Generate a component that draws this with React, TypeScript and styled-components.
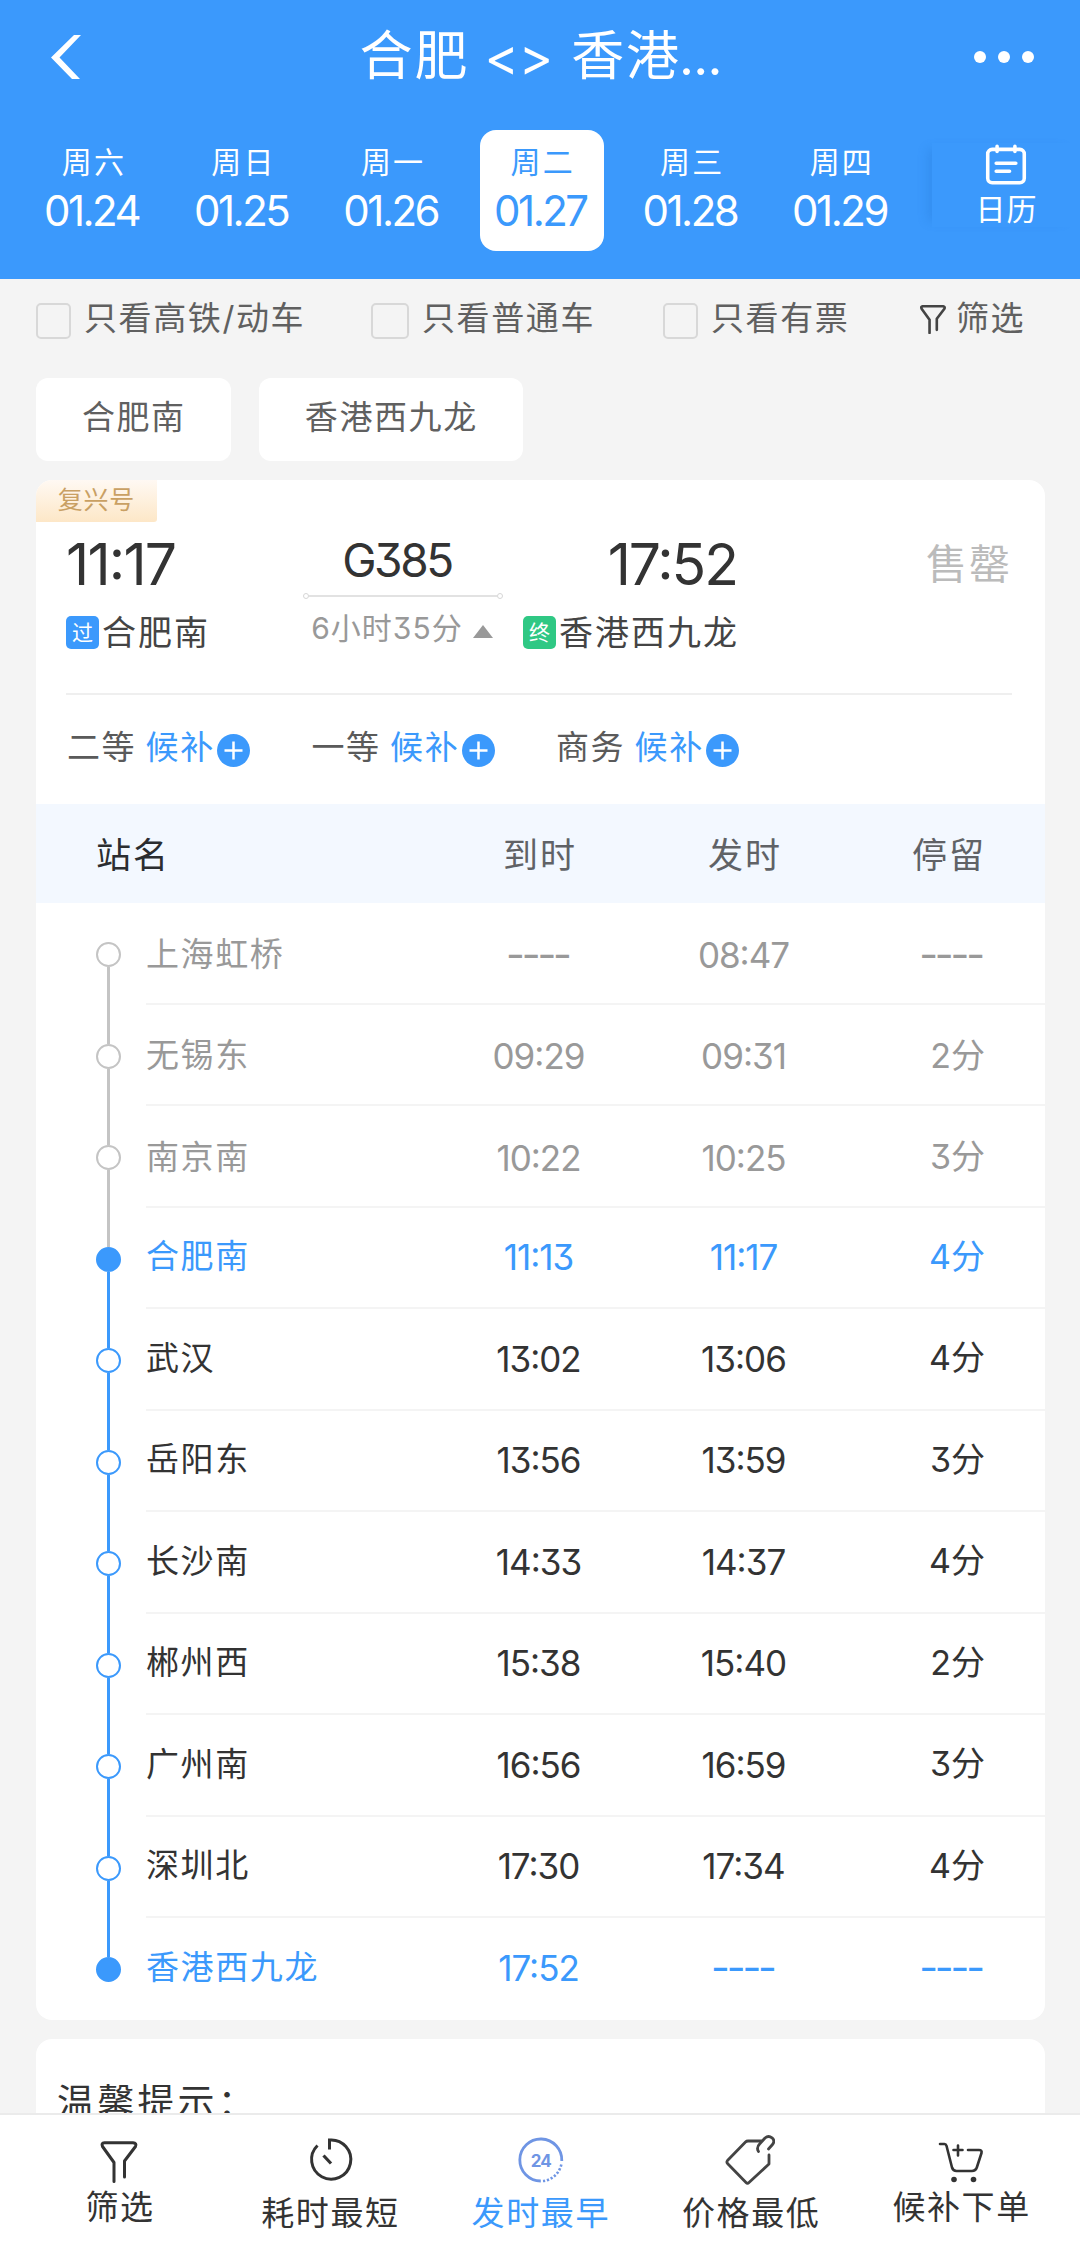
import React from "react";
import styled, { createGlobalStyle, css } from "styled-components";

const BLUE = "#3b99fc";

const GlobalStyle = createGlobalStyle`
  *, *::before, *::after { box-sizing: border-box; }
  body {
    margin: 0;
    background: #f4f4f4;
    font-family: Inter, "Noto Sans CJK SC", sans-serif;
    font-feature-settings: "cv09" 1, "calt" 1;
  }
`;

const Page = styled.div`
  width: 1080px;
  height: 2249px;
  display: flex;
  flex-direction: column;
  overflow: hidden;
  background: #f4f4f4;
`;

/* ---------- text helpers ---------- */

const Cjk = styled.span<{ $size?: number; $gap?: number; $color?: string }>`
  font-size: ${(p) => p.$size ?? 33}px;
  letter-spacing: ${(p) => p.$gap ?? 1.6}px;
  margin-right: -${(p) => p.$gap ?? 1.6}px;
  line-height: 1.2;
  white-space: pre;
  color: ${(p) => p.$color ?? "inherit"};
`;

const Num = styled.span<{ $size: number; $gap?: number }>`
  font-size: ${(p) => p.$size}px;
  letter-spacing: ${(p) => p.$gap ?? -1}px;
  margin-right: ${(p) => -(p.$gap ?? -1)}px;
  line-height: 1.2;
  white-space: pre;
`;

/* ---------- header ---------- */

const Header = styled.header`
  flex: none;
  height: 279px;
  background: ${BLUE};
  color: #fff;
`;

const TitleBar = styled.div`
  height: 130px;
  display: grid;
  grid-template-columns: 120px 1fr 120px;
  padding: 0 46px 16px 51px;
  align-items: center;
`;

const Title = styled.h1`
  margin: 0 3px 0 0;
  display: flex;
  justify-content: center;
  align-items: center;
  font-weight: 400;
`;

const Arrows = styled(Num)`
  padding: 0 18px 0 17px;
`;

const More = styled.div`
  display: flex;
  justify-content: flex-end;
  gap: 12px;
`;

const MoreDot = styled.i`
  width: 12px;
  height: 12px;
  border-radius: 50%;
  background: #fff;
`;

const DateStrip = styled.div`
  display: flex;
  padding-left: 18px;
`;

const Day = styled.div<{ $active?: boolean }>`
  width: 124px;
  margin: 0 12.8px;
  height: 121px;
  display: flex;
  flex-direction: column;
  align-items: center;
  padding-top: 14px;
  border-radius: 16px;
  ${(p) =>
    p.$active &&
    css`
      background: #fff;
      color: ${BLUE};
    `}
`;

const DayNumber = styled(Num)`
  margin-top: 6px;
`;

const Days = styled.div`
  flex: none;
  width: 914px;
  display: flex;
`;

const CalendarButton = styled.div`
  flex: 1;
  height: 84px;
  margin-top: 13px;
  padding: 1px 0 0 0;
  display: flex;
  flex-direction: column;
  align-items: center;
  gap: 6px;
  box-shadow: -10px 0 10px -6px rgba(30, 110, 200, 0.24);
`;

/* ---------- filters ---------- */

const Filters = styled.div`
  flex: none;
  height: 99px;
  padding: 20px 0 0 36px;
  display: flex;
`;

const Filter = styled.label<{ $width: number }>`
  width: ${(p) => p.$width}px;
  display: flex;
  align-items: flex-start;
`;

const Box = styled.i<{ $w?: number }>`
  flex: none;
  width: ${(p) => p.$w ?? 35}px;
  height: 36px;
  margin: 4px 13px 0 0;
  border: 2px solid #d8d8d8;
  border-radius: 5px;
`;

const FunnelFilter = styled.div`
  display: flex;
  align-items: flex-start;
  gap: 9px;
  color: #606060;
  svg {
    margin-top: 6px;
  }
`;

const Chips = styled.div`
  flex: none;
  display: flex;
  gap: 28px;
  padding-left: 36px;
  margin-bottom: 19px;
`;

const Chip = styled.button<{ $width: number }>`
  width: ${(p) => p.$width}px;
  height: 83px;
  padding: 0 1px 4px 0;
  display: flex;
  justify-content: center;
  align-items: center;
  border: 0;
  border-radius: 12px;
  background: #fff;
  color: #606060;
  font: inherit;
`;

/* ---------- train card ---------- */

const List = styled.main`
  flex: 1;
  min-height: 0;
  overflow: hidden;
  padding: 0 35px 0 36px;
`;

const Card = styled.section`
  background: #fff;
  border-radius: 16px;
  overflow: hidden;
  margin-bottom: 19px;
`;

const Tag = styled.div`
  width: 121px;
  height: 42px;
  display: flex;
  justify-content: center;
  align-items: center;
  padding: 0 1px 2px 0;
  border-radius: 0 0 3px 0;
  background: linear-gradient(#fff9f3, #fde7c7);
  color: #c9a063;
`;

const Trip = styled.div`
  display: flex;
  height: 173px;
  margin: 0 33px 0 30px;
  border-bottom: 2px solid #efefef;
`;

const Column = styled.div<{ $width: number; $align: string; $top?: number }>`
  width: ${(p) => p.$width}px;
  padding-top: ${(p) => p.$top ?? 9}px;
  display: flex;
  flex-direction: column;
  align-items: ${(p) => p.$align};
  color: #333;
`;

const Station = styled.div`
  display: flex;
  align-items: center;
  margin-top: 11.5px;
  color: #444;
`;

const StationName = styled(Cjk)`
  padding-top: 2px;
`;

const Badge = styled.span<{ $color: string }>`
  width: 33px;
  height: 33px;
  margin-right: 3px;
  display: flex;
  justify-content: center;
  align-items: center;
  border-radius: 5px;
  background: ${(p) => p.$color};
  color: #fff;
  font-size: 21px;
  line-height: 1;
`;

const TrainNumber = styled(Num)`
  margin-right: 12px;
`;

const ArrivalTime = styled(Num)`
  margin-right: 0;
`;

const Route = styled.div`
  width: 200px;
  height: 6px;
  margin: 5px 0 11px;
  display: flex;
  align-items: center;
  &::before,
  &::after {
    content: "";
    width: 6px;
    height: 6px;
    border: 1.5px solid #d6d6d6;
    border-radius: 50%;
  }
`;

const RouteLine = styled.i`
  flex: 1;
  height: 2px;
  background: #e2e2e2;
`;

const Duration = styled.div`
  display: flex;
  align-items: center;
  gap: 11px;
  margin-right: 2px;
  color: #999;
`;

const Triangle = styled.i`
  margin-top: 7px;
  border: 10px solid transparent;
  border-top: 0;
  border-bottom: 13px solid #999;
`;

const SoldOut = styled.div`
  flex: 1;
  display: flex;
  justify-content: flex-end;
  padding: 18px 2px 0 0;
  color: #bbb;
`;

const Seats = styled.div`
  height: 109px;
  display: flex;
  padding: 31px 0 0 31px;
`;

const Seat = styled.div`
  width: 244.5px;
  height: 44px;
  display: flex;
  align-items: center;
  color: #5a5a5a;
`;

const Waitlist = styled.span`
  display: flex;
  align-items: center;
  gap: 4px;
  margin-left: 11px;
  color: ${BLUE};
  svg {
    margin-top: 4px;
  }
`;

/* ---------- timetable ---------- */

const TableHead = styled.div`
  height: 99px;
  display: grid;
  grid-template-columns: 400px 206px 204px 1fr;
  align-items: center;
  padding-top: 2px;
  background: #f3f8ff;
  color: #606266;
`;

const Centered = styled.div`
  display: flex;
  justify-content: center;
`;

const RightCell = styled.div<{ $right?: number }>`
  display: flex;
  justify-content: flex-end;
  padding-right: ${(p) => p.$right ?? 60}px;
`;

const HeadName = styled.div`
  padding-left: 60px;
  color: #2b2d30;
`;

type StopKind = "past" | "endpoint" | "normal";

const stopColor: Record<StopKind, string> = {
  past: "#999",
  endpoint: BLUE,
  normal: "#333",
};

const StopRow = styled.div<{ $kind: StopKind }>`
  height: 101.5px;
  display: grid;
  grid-template-columns: 110px 1fr;
  color: ${(p) => stopColor[p.$kind]};
`;

const Rail = styled.div`
  height: 101.5px;
  display: flex;
  flex-direction: column;
  align-items: center;
  padding-left: 35px;
`;

const Segment = styled.i<{ $color: string; $head?: boolean }>`
  width: 3px;
  ${(p) => (p.$head ? "height: 39px;" : "flex: 1;")}
  background: ${(p) => p.$color};
`;

const Knot = styled.i<{ $color: string; $filled: boolean }>`
  flex: none;
  width: 25px;
  height: 25px;
  border: 2.5px solid ${(p) => p.$color};
  border-radius: 50%;
  background: ${(p) => (p.$filled ? p.$color : "#fff")};
`;

const StopInfo = styled.div<{ $past: boolean }>`
  height: 101.5px;
  display: grid;
  grid-template-columns: 290px 206px 204px 1fr;
  align-items: center;
  padding-top: ${(p) => (p.$past ? 4 : 0)}px;
  border-bottom: 2px solid #f4f4f4;
  ${StopRow}:last-child & {
    border-color: transparent;
  }
`;

/* ---------- notice ---------- */

const Notice = styled(Card)`
  height: 200px;
  padding: 42px 0 0 21px;
  color: #333;
`;

/* ---------- bottom bar ---------- */

const TabBar = styled.nav`
  flex: none;
  height: 136px;
  display: flex;
  padding: 0 14px;
  border-top: 2px solid #ebebeb;
  background: #fff;
`;

const Tab = styled.div<{ $active?: boolean; $compact?: boolean }>`
  flex: 1;
  display: flex;
  flex-direction: column;
  align-items: center;
  padding-top: ${(p) => (p.$compact ? 18 : 20)}px;
  gap: ${(p) => (p.$compact ? 5 : 9)}px;
  color: ${(p) => (p.$active ? BLUE : "#333")};
`;

/* ---------- icons ---------- */

const BackIcon = () => (
  <svg width="31" height="44" viewBox="0 0 31 44">
    <path d="M23 0h7L8.500 22.500 29 44h-8L0 22.500z" fill="#fff" />
  </svg>
);

const CalendarIcon = () => (
  <svg width="46" height="46" viewBox="0 0 46 46" fill="none" stroke="#fff" strokeWidth="4" strokeLinecap="round">
    <rect x="2.5" y="6" width="41" height="37.5" rx="5" />
    <path d="M13 2.500v6M33 2.500v6M12 21.500h22M12 30.500h15" />
  </svg>
);

const FunnelIcon = ({ w, h, color, stroke }: { w: number; h: number; color: string; stroke: number }) => (
  <svg
    width={w}
    height={h}
    viewBox="0 0 38 42"
    fill="none"
    stroke={color}
    strokeWidth={stroke}
    strokeLinecap="round"
    strokeLinejoin="round"
  >
    <path d="M14 40.500V21.500L2.500 5.500Q1 2 4.500 1.800h28.500Q37 2 35.500 5.500L24.500 20v16" />
  </svg>
);

const PlusIcon = () => (
  <svg width="33" height="33" viewBox="0 0 33 33">
    <circle cx="16.500" cy="16.500" r="16.500" fill={BLUE} />
    <path d="M16.500 7.500v18M7.500 16.500h18" stroke="#fff" strokeWidth="2.500" />
  </svg>
);

const TimerIcon = () => (
  <svg width="50" height="50" viewBox="0 0 50 50" fill="none" stroke="#333" strokeWidth="3">
    <path d="M12.500 10.500A19.600 19.600 0 1 0 24.500 5v9.500" />
    <path d="M18.500 20.500l7.500 8" strokeWidth="3.200" />
  </svg>
);

const Clock24Icon = () => (
  <svg width="50" height="50" viewBox="0 0 50 50" fill="none" stroke="#6f95e4" strokeWidth="2.800">
    <path d="M46.800 26A21 21 0 1 0 25.800 46" />
    <path d="M28 46A21 21 0 0 0 46.500 28.500" strokeWidth="2.600" strokeDasharray="2.200 1.800" />
    <text
      x="25.800"
      y="31.500"
      textAnchor="middle"
      fontFamily="Inter, sans-serif"
      fontWeight="700"
      fontSize="17"
      letterSpacing="-0.800"
      fill="#6f95e4"
      stroke="none"
    >
      24
    </text>
  </svg>
);

const TagIcon = () => (
  <svg
    width="50"
    height="50"
    viewBox="0 0 50 50"
    fill="none"
    stroke="#444"
    strokeWidth="2.800"
    strokeLinecap="round"
    strokeLinejoin="round"
  >
    <path d="M36 6H23Q21.500 6 20.500 7L2.500 25.500Q1.300 27 2.500 28.500L21 47.500Q22.500 49 24 47.500L44 29V20" />
    <path d="M33.500 16.500Q31 12.500 35 8.500L40 3Q43.500 0 47 2.800 50.500 6 47.500 9.500L43.500 14" />
  </svg>
);

const CartIcon = () => (
  <svg
    width="46"
    height="44"
    viewBox="0 0 46 44"
    fill="none"
    stroke="#333"
    strokeWidth="2.600"
    strokeLinecap="round"
    strokeLinejoin="round"
  >
    <path d="M2 3h4.500q1.500 0 2 1.800L14 26.500q1.200 3.500 4.500 3.500H34q3.500 0 4.800-3.500L43.500 12q.800-3-2.500-3H30" />
    <path d="M20 4.500v10M15.500 9h9" />
    <circle cx="16" cy="38.500" r="2.800" fill="#333" stroke="none" />
    <circle cx="35.500" cy="38.500" r="2.800" fill="#333" stroke="none" />
  </svg>
);

/* ---------- data ---------- */

const days = [
  ["周六", "01.24"],
  ["周日", "01.25"],
  ["周一", "01.26"],
  ["周二", "01.27"],
  ["周三", "01.28"],
  ["周四", "01.29"],
];

const stops: { name: string; arrive: string; depart: string; stay: string; kind: StopKind }[] = [
  { name: "上海虹桥", arrive: "----", depart: "08:47", stay: "----", kind: "past" },
  { name: "无锡东", arrive: "09:29", depart: "09:31", stay: "2分", kind: "past" },
  { name: "南京南", arrive: "10:22", depart: "10:25", stay: "3分", kind: "past" },
  { name: "合肥南", arrive: "11:13", depart: "11:17", stay: "4分", kind: "endpoint" },
  { name: "武汉", arrive: "13:02", depart: "13:06", stay: "4分", kind: "normal" },
  { name: "岳阳东", arrive: "13:56", depart: "13:59", stay: "3分", kind: "normal" },
  { name: "长沙南", arrive: "14:33", depart: "14:37", stay: "4分", kind: "normal" },
  { name: "郴州西", arrive: "15:38", depart: "15:40", stay: "2分", kind: "normal" },
  { name: "广州南", arrive: "16:56", depart: "16:59", stay: "3分", kind: "normal" },
  { name: "深圳北", arrive: "17:30", depart: "17:34", stay: "4分", kind: "normal" },
  { name: "香港西九龙", arrive: "17:52", depart: "----", stay: "----", kind: "endpoint" },
];

const GREY_LINE = "#c4c4c4";

const Time = ({ value }: { value: string }) =>
  value === "----" ? (
    <Num $size={41} $gap={-3.2}>
      {value}
    </Num>
  ) : (
    <Num $size={35} $gap={-1}>
      {value}
    </Num>
  );

export default function App() {
  return (
    <Page>
      <GlobalStyle />
      <Header>
        <TitleBar>
          <BackIcon />
          <Title>
            <Cjk $size={53} $gap={1.8}>合肥</Cjk>
            <Arrows $size={52} $gap={0}>{"<>"}</Arrows>
            <Cjk $size={53} $gap={1.8}>香港</Cjk>
            <Num $size={52} $gap={-0.8}>...</Num>
          </Title>
          <More>
            <MoreDot />
            <MoreDot />
            <MoreDot />
          </More>
        </TitleBar>
        <DateStrip>
          <Days>
            {days.map(([week, date]) => (
              <Day key={date} $active={date === "01.27"}>
                <Cjk $size={30} $gap={2.2}>{week}</Cjk>
                <DayNumber $size={42} $gap={-2.5}>{date}</DayNumber>
              </Day>
            ))}
          </Days>
          <CalendarButton>
            <CalendarIcon />
            <Cjk $size={30} $gap={1}>日历</Cjk>
          </CalendarButton>
        </DateStrip>
      </Header>

      <Filters>
        <Filter $width={335}>
          <Box />
          <Cjk $color="#606060">只看高铁/动车</Cjk>
        </Filter>
        <Filter $width={292}>
          <Box $w={38} />
          <Cjk $color="#606060">只看普通车</Cjk>
        </Filter>
        <Filter $width={256}>
          <Box />
          <Cjk $color="#606060">只看有票</Cjk>
        </Filter>
        <FunnelFilter>
          <FunnelIcon w={28} h={29} color="#444" stroke={3.8} />
          <Cjk>筛选</Cjk>
        </FunnelFilter>
      </Filters>

      <Chips>
        <Chip $width={195}>
          <Cjk>合肥南</Cjk>
        </Chip>
        <Chip $width={264}>
          <Cjk>香港西九龙</Cjk>
        </Chip>
      </Chips>

      <List>
        <Card>
          <Tag>
            <Cjk $size={25} $gap={0.8}>复兴号</Cjk>
          </Tag>
          <Trip>
            <Column $width={236} $align="flex-start">
              <Num $size={57} $gap={-1.8}>11:17</Num>
              <Station>
                <Badge $color={BLUE}>过</Badge>
                <StationName $size={34} $gap={2}>合肥南</StationName>
              </Station>
            </Column>
            <Column $width={202} $align="center" $top={11}>
              <TrainNumber $size={46} $gap={-2.4}>G385</TrainNumber>
              <Route>
                <RouteLine />
              </Route>
              <Duration>
                <Cjk $size={30} $gap={1}>6小时35分</Cjk>
                <Triangle />
              </Duration>
            </Column>
            <Column $width={233} $align="flex-end">
              <ArrivalTime $size={57} $gap={-2}>17:52</ArrivalTime>
              <Station>
                <Badge $color="#2fc884">终</Badge>
                <StationName $size={34} $gap={2}>香港西九龙</StationName>
              </Station>
            </Column>
            <SoldOut>
              <Cjk $size={41} $gap={2}>售罄</Cjk>
            </SoldOut>
          </Trip>
          <Seats>
            {["二等", "一等", "商务"].map((seat) => (
              <Seat key={seat}>
                <Cjk>{seat}</Cjk>
                <Waitlist>
                  <Cjk>候补</Cjk>
                  <PlusIcon />
                </Waitlist>
              </Seat>
            ))}
          </Seats>

          <TableHead>
            <HeadName>
              <Cjk $size={35} $gap={2}>站名</Cjk>
            </HeadName>
            <Centered>
              <Cjk $size={35} $gap={2}>到时</Cjk>
            </Centered>
            <Centered>
              <Cjk $size={35} $gap={2}>发时</Cjk>
            </Centered>
            <RightCell $right={61}>
              <Cjk $size={35} $gap={2}>停留</Cjk>
            </RightCell>
          </TableHead>
          <div>
            {stops.map((stop, i) => {
              const past = stop.kind === "past";
              const own = past ? GREY_LINE : BLUE;
              const above = i === 0 ? "transparent" : stops[i - 1].kind === "past" ? GREY_LINE : BLUE;
              const below = i === stops.length - 1 ? "transparent" : own;
              return (
                <StopRow key={stop.name} $kind={stop.kind}>
                  <Rail>
                    <Segment $head $color={above} />
                    <Knot $color={own} $filled={stop.kind === "endpoint"} />
                    <Segment $color={below} />
                  </Rail>
                  <StopInfo $past={past}>
                    <Cjk>{stop.name}</Cjk>
                    <Centered>
                      <Time value={stop.arrive} />
                    </Centered>
                    <Centered>
                      <Time value={stop.depart} />
                    </Centered>
                    <RightCell>
                      {stop.stay === "----" ? (
                        <Time value={stop.stay} />
                      ) : (
                        <Cjk $size={34} $gap={0}>{stop.stay}</Cjk>
                      )}
                    </RightCell>
                  </StopInfo>
                </StopRow>
              );
            })}
          </div>
        </Card>

        <Notice>
          <Cjk $size={37} $gap={3.2}>温馨提示：</Cjk>
        </Notice>
      </List>

      <TabBar>
        <Tab $compact>
          <svg width="38" height="50" viewBox="0 -8 38 50" overflow="visible">
            <FunnelIcon w={38} h={42} color="#333" stroke={3} />
          </svg>
          <Cjk>筛选</Cjk>
        </Tab>
        <Tab>
          <TimerIcon />
          <Cjk>耗时最短</Cjk>
        </Tab>
        <Tab $active>
          <Clock24Icon />
          <Cjk>发时最早</Cjk>
        </Tab>
        <Tab>
          <TagIcon />
          <Cjk>价格最低</Cjk>
        </Tab>
        <Tab $compact>
          <svg width="46" height="50" viewBox="0 -8 46 50" overflow="visible">
            <CartIcon />
          </svg>
          <Cjk>候补下单</Cjk>
        </Tab>
      </TabBar>
    </Page>
  );
}
